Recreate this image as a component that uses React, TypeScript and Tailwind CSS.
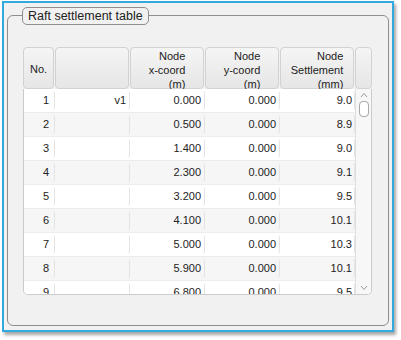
import React from 'react';

type Row = { no: number; name: string; x: string; y: string; s: string };

const rows: Row[] = [
  { no: 1, name: 'v1', x: '0.000', y: '0.000', s: '9.0' },
  { no: 2, name: '', x: '0.500', y: '0.000', s: '8.9' },
  { no: 3, name: '', x: '1.400', y: '0.000', s: '9.0' },
  { no: 4, name: '', x: '2.300', y: '0.000', s: '9.1' },
  { no: 5, name: '', x: '3.200', y: '0.000', s: '9.5' },
  { no: 6, name: '', x: '4.100', y: '0.000', s: '10.1' },
  { no: 7, name: '', x: '5.000', y: '0.000', s: '10.3' },
  { no: 8, name: '', x: '5.900', y: '0.000', s: '10.1' },
  { no: 9, name: '', x: '6.800', y: '0.000', s: '9.5' },
];

const HeaderCell: React.FC<{ width: string; children?: React.ReactNode }> = ({ width, children }) => (
  <div className={`${width} h-full pr-[1px]`}>
    <div className="h-full rounded-[4px] border border-[#d2d2d2] bg-gradient-to-b from-[#f5f5f5] to-[#e6e6e6] flex items-center justify-center pt-[3px]">
      {children}
    </div>
  </div>
);

const StackedHeader: React.FC<{ lines: string[] }> = ({ lines }) => (
  <div className="text-right leading-[14px]">
    {lines.map((l) => (
      <div key={l}>{l}</div>
    ))}
  </div>
);

const Cell: React.FC<{ width: string; pad: string; children?: React.ReactNode }> = ({ width, pad, children }) => (
  <div className={`${width} h-full py-[2px]`}>
    <div className={`h-full border-r border-[#e4e4e4] rounded-r-[3px] flex items-center justify-end ${pad}`}>
      {children}
    </div>
  </div>
);

export default function App() {
  return (
    <div className="w-[401px] h-[340px] bg-white font-['Liberation_Sans',Arial,sans-serif] text-[#222] pt-[1px] pl-[2px]">
      <div className="w-[392px] h-[331px] border-2 border-[#32a9df] bg-[#f1f1f1] shadow-[2px_3px_3px_rgba(0,0,0,0.35)] pl-[3px] pt-[12px]">
        <div className="relative w-[382px] h-[311px] rounded-[6px] border border-[#8e8e8e] pl-[15px] pt-[31px]">
          <div className="absolute left-[14px] top-[-9px] h-[18px] px-[5px] rounded-[5px] border border-[#8e8e8e] bg-[#f1f1f1] text-[12.5px] leading-[16px] flex items-center">
            Raft settlement table
          </div>

          <div className="w-[349px] h-[248px] flex flex-col text-[11px]">
            <div className="h-[42px] flex">
              <HeaderCell width="w-[32px]">No.</HeaderCell>
              <HeaderCell width="w-[75px]" />
              <HeaderCell width="w-[75px]">
                <StackedHeader lines={['Node', 'x-coord', '(m)']} />
              </HeaderCell>
              <HeaderCell width="w-[75px]">
                <StackedHeader lines={['Node', 'y-coord', '(m)']} />
              </HeaderCell>
              <HeaderCell width="w-[75px]">
                <StackedHeader lines={['Node', 'Settlement', '(mm)']} />
              </HeaderCell>
              <div className="w-[17px] h-full">
                <div className="h-full rounded-[4px] border border-[#d2d2d2] bg-gradient-to-b from-[#f5f5f5] to-[#e6e6e6]" />
              </div>
            </div>

            <div className="flex-1 flex min-h-0 border border-t-0 border-[#cbcbcb] rounded-b-[5px] overflow-hidden bg-white">
              <div className="flex-1 flex flex-col">
                {rows.map((r, i) => (
                  <div
                    key={r.no}
                    className={`h-[24px] shrink-0 flex border-b border-[#ececec] ${i % 2 === 0 ? 'bg-white' : 'bg-[#f6f6f6]'}`}
                  >
                    <Cell width="w-[31px]" pad="pr-[5px]">{r.no}</Cell>
                    <Cell width="w-[75px]" pad="pr-[3px]">{r.name}</Cell>
                    <Cell width="w-[75px]" pad="pr-[3px]">{r.x}</Cell>
                    <Cell width="w-[75px]" pad="pr-[3px]">{r.y}</Cell>
                    <Cell width="w-[75px]" pad="pr-[2px]">{r.s}</Cell>
                  </div>
                ))}
              </div>
              <div className="w-[16px] h-full border-l border-[#dedede] bg-[#f7f7f7] flex flex-col items-center">
                <svg width="8" height="6" viewBox="0 0 8 6" className="mt-[3px]">
                  <path d="M1 5 L4 1.5 L7 5" fill="none" stroke="#9a9a9a" strokeWidth="1" />
                </svg>
                <div className="mt-[3px] w-[10px] h-[16px] rounded-[4px] border border-[#a8a8a8] bg-white" />
                <div className="flex-1" />
                <svg width="8" height="6" viewBox="0 0 8 6" className="mb-[3px]">
                  <path d="M1 1 L4 4.5 L7 1" fill="none" stroke="#9a9a9a" strokeWidth="1" />
                </svg>
              </div>
            </div>
          </div>
        </div>
      </div>
    </div>
  );
}
